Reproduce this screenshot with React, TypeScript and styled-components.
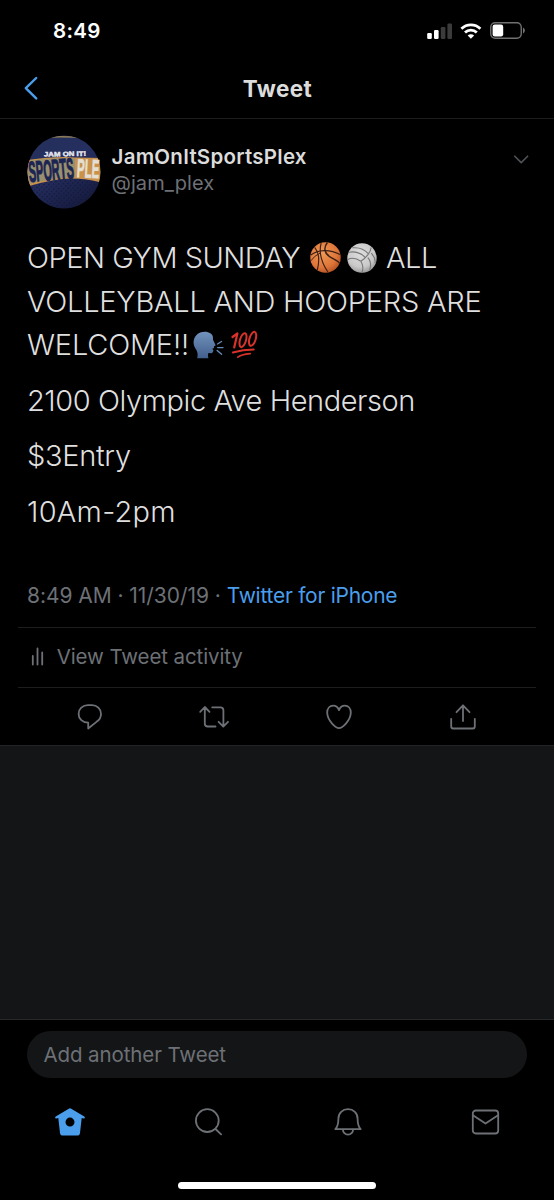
import React from "react";
import styled, { createGlobalStyle } from "styled-components";

const BLUE = "#4a9eeb";
const MUTED = "#6d7176";
const LINE = "#1c1d1f";

const GlobalStyle = createGlobalStyle`
  *, *::before, *::after { box-sizing: border-box; }
  html, body { margin: 0; background: #000; }
  body { font-family: Inter, "Liberation Sans", sans-serif; }
  p, h1 { margin: 0; }
  svg { display: block; flex: none; overflow: visible; }
`;

const Screen = styled.div`
  width: 554px;
  height: 1200px;
  display: flex;
  flex-direction: column;
  background: #000;
  overflow: hidden;
  white-space: nowrap;
`;

const StatusBar = styled.div`
  height: 60px;
  padding: 1px 29px 0 53px;
  display: flex;
  align-items: center;
  justify-content: space-between;
`;

const Clock = styled.span`
  color: #fff;
  font-size: 20.5px;
  font-weight: 600;
  letter-spacing: 0.3px;
`;

const StatusIcons = styled.div`
  display: flex;
  align-items: center;
  gap: 8px;
`;

const NavBar = styled.header`
  height: 59px;
  padding: 0 23px 2px;
  display: grid;
  grid-template-columns: 60px 1fr 60px;
  align-items: center;
  border-bottom: 1px solid ${LINE};
`;

const Title = styled.h1`
  color: #dcdcdc;
  text-align: center;
  padding-left: 1px;
  font-size: 22.5px;
  font-weight: 700;
  letter-spacing: 0.4px;
`;

const Tweet = styled.article`
  height: 627px;
  padding: 16px 18px 0;
  border-bottom: 1px solid #222426;
`;

const Author = styled.div`
  display: flex;
  height: 74px;
  padding: 0 7px 0 9px;
`;

const Names = styled.div`
  flex: 1;
  padding: 9px 0 0 10.5px;
`;

const Name = styled.p`
  color: #dcdcdc;
  font-size: 20.5px;
  line-height: 26px;
  font-weight: 600;
  letter-spacing: 0.25px;
`;

const Handle = styled.p`
  color: ${MUTED};
  font-size: 20px;
  line-height: 26px;
  letter-spacing: 0.1px;
`;

const MenuCaret = styled.div`
  padding-top: 20px;
`;

const Body = styled.div`
  display: flex;
  flex-direction: column;
  gap: 12px;
  padding: 27px 9px 0;
  color: #dfdfdf;
  font-size: 29px;
  line-height: 43.5px;
  font-weight: 300;
`;

const TextLine = styled.span<{ $tracking?: number }>`
  display: flex;
  align-items: center;
  height: 43.5px;
  letter-spacing: ${(p) => p.$tracking ?? 0}px;
`;

const Emoji = styled.span<{ $before?: number; $after?: number }>`
  display: inline-flex;
  margin-left: ${(p) => p.$before ?? 0}px;
  margin-right: ${(p) => p.$after ?? 0}px;
`;

const Meta = styled.p`
  height: 93.5px;
  padding: 46.5px 9px 0;
  color: ${MUTED};
  font-size: 21px;
  line-height: 32px;
  letter-spacing: -0.05px;
`;

const Source = styled.span`
  color: ${BLUE};
  letter-spacing: -0.26px;
`;

const Activity = styled.div`
  height: 61px;
  display: flex;
  align-items: center;
  gap: 13px;
  padding: 0 0 1px 12.7px;
  border-top: 1px solid ${LINE};
  border-bottom: 1px solid ${LINE};
  color: ${MUTED};
  font-size: 20.5px;
  letter-spacing: -0.1px;
`;

const Actions = styled.div`
  height: 58px;
  padding-right: 1px;
  display: grid;
  grid-template-columns: repeat(4, 124.5px);
  justify-content: center;
  justify-items: center;
  align-items: center;
`;

const Replies = styled.div`
  height: 274px;
  background: #141517;
  border-bottom: 1px solid #28292b;
`;

const Composer = styled.div`
  height: 69px;
  padding: 11px 27px;
`;

const Field = styled.div`
  height: 47px;
  border-radius: 24px;
  display: flex;
  align-items: center;
  padding-left: 16.5px;
  background: #141517;
  color: ${MUTED};
  font-size: 20.5px;
  letter-spacing: -0.1px;
`;

const TabBar = styled.nav`
  height: 66px;
  display: grid;
  grid-template-columns: repeat(4, 138.5px);
  justify-items: center;
  align-items: center;
  padding-left: 0.5px;
`;

const HomeIndicator = styled.div`
  width: 198px;
  height: 7px;
  margin: 27px auto 0;
  border-radius: 4px;
  background: #fff;
`;

const Stroke = styled.svg<{ $color?: string; $weight?: number }>`
  fill: none;
  stroke: ${(p) => p.$color ?? MUTED};
  stroke-width: ${(p) => p.$weight ?? 1.8};
  stroke-linecap: round;
  stroke-linejoin: round;
`;

function Signal() {
  return (
    <svg width="25" height="16" viewBox="0 0 25 16">
      <rect x="-0.8" y="10" width="4.6" height="6" rx="1.2" fill="#fff" />
      <rect x="6" y="7" width="4.6" height="9" rx="1.2" fill="#fff" />
      <rect x="12.8" y="4" width="4.6" height="12" rx="1.2" fill="#3b3b3b" />
      <rect x="19.4" y="0.5" width="4.6" height="15.5" rx="1.2" fill="#3b3b3b" />
    </svg>
  );
}

function Wifi() {
  return (
    <svg width="21" height="16" viewBox="0.6 0 21 16" fill="none" stroke="#fff" strokeWidth="2.8">
      <path d="M1 5.7a13.6 13.6 0 0 1 19 0" />
      <path d="M4.6 9.5a8.4 8.4 0 0 1 11.8 0" />
      <path d="M10.5 15.8 7.3 12.6a4.6 4.6 0 0 1 6.4 0z" fill="#fff" stroke="none" />
    </svg>
  );
}

function Battery() {
  return (
    <svg width="35" height="17" viewBox="0 0 35 17">
      <rect x="0.75" y="0.75" width="30.5" height="15.5" rx="4.4" fill="none" stroke="#717171" strokeWidth="1.4" />
      <rect x="2.6" y="2.6" width="10.6" height="11.8" rx="2.2" fill="#fff" />
      <path d="M33 5.6q1.9 1 1.9 2.9T33 11.4z" fill="#717171" />
    </svg>
  );
}

function Avatar() {
  return (
    <svg width="74" height="74" viewBox="0 0 74 74">
      <defs>
        <clipPath id="face"><circle cx="37" cy="37" r="36.5" /></clipPath>
        <linearGradient id="navy" x1="0" y1="0" x2="0.6" y2="1">
          <stop offset="0" stopColor="#263059" />
          <stop offset="0.5" stopColor="#252f60" />
          <stop offset="1" stopColor="#171c40" />
        </linearGradient>
        <pattern id="mesh" width="3.4" height="3.4" patternUnits="userSpaceOnUse" patternTransform="rotate(42)">
          <circle cx="1.7" cy="1.7" r="0.9" fill="#10153a" />
        </pattern>
      </defs>
      <g clipPath="url(#face)">
        <rect width="74" height="74" fill="url(#navy)" />
        <path d="M0 48Q36 38 74 47v27H0z" fill="url(#mesh)" opacity="0.65" />
        <path d="M16 2.4q20-1.500 42 .4" stroke="#8e7d55" strokeWidth="1.4" fill="none" />
        <path d="M0 25Q30 21 48 22.500L74 23V47.500Q60 43.500 44 43.500T0 51.500z" fill="#c9914a" />
        <path d="M0 26Q30 22 48 23.500V42Q24 43 0 49.500z" fill="#99906f" />
      </g>
      <g fontFamily="Liberation Sans, sans-serif" fontWeight="700">
        <text x="17" y="21.2" fontSize="6.500" fill="#e8e8ee" stroke="#e8e8ee" strokeWidth="0.4" textLength="42" lengthAdjust="spacingAndGlyphs" transform="rotate(-1 38 20)">JAM ON IT!</text>
        <text x="2.500" y="47" fontSize="29" fill="#1b2452" stroke="#1b2452" strokeWidth="1.1" textLength="45" lengthAdjust="spacingAndGlyphs" transform="rotate(-5 2 46)">SPORTS</text>
        <text x="49.500" y="42" fontSize="26" fill="#e4dfd2" stroke="#e4dfd2" strokeWidth="0.8" textLength="22.500" lengthAdjust="spacingAndGlyphs" transform="rotate(3 49 42)">PLE</text>
      </g>
    </svg>
  );
}

function Basketball() {
  return (
    <svg width="31" height="31" viewBox="0 0 32 32">
      <defs>
        <radialGradient id="orange" cx="0.4" cy="0.35" r="0.75">
          <stop offset="0" stopColor="#f09a55" />
          <stop offset="0.65" stopColor="#dd7438" />
          <stop offset="1" stopColor="#a9481c" />
        </radialGradient>
      </defs>
      <circle cx="16" cy="16" r="15.7" fill="url(#orange)" />
      <g fill="none" stroke="#3d2017" strokeWidth="1.2">
        <path d="M11.5 1.2C9.5 9 11 20 18.5 31" />
        <path d="M18 .5C13.5 6 15 12 21 15.5S30 20 30.5 22" strokeWidth="1.5" />
        <path d="M.8 13.5C8 8 20 7 31 13" />
        <path d="M4.8 5.5C9.500 11 9.800 20 7.500 29" />
        <path d="M.8 19.5Q4 14.5 11 11" strokeWidth="1" />
      </g>
    </svg>
  );
}

function Volleyball() {
  return (
    <svg width="30" height="30" viewBox="0 0 31 31">
      <defs>
        <radialGradient id="white" cx="0.45" cy="0.35" r="0.7">
          <stop offset="0" stopColor="#dedede" />
          <stop offset="0.65" stopColor="#c9c9c9" />
          <stop offset="1" stopColor="#929292" />
        </radialGradient>
      </defs>
      <circle cx="15.5" cy="15.5" r="15.2" fill="url(#white)" />
      <g fill="none" stroke="#777" strokeWidth="1.1">
        <path d="M14.3 18.8C9.5 15.5 4.8 15 0.8 17" />
        <path d="M14.3 18.8C19.8 15.5 24.5 9.5 25 4.5" />
        <path d="M14.3 18.8C16.5 22.5 16.8 27 15.5 30.4" />
        <path d="M2 9.5C8 8.5 14.5 10.5 18.7 14.8" />
        <path d="M5.5 5C12 4.2 18.5 7 22 11" />
        <path d="M21.5 15C24.5 18 25 23 23.5 28" />
        <path d="M25 10.5C28 13.5 29.5 17 29 21" />
      </g>
    </svg>
  );
}

function SpeakingHead() {
  return (
    <svg width="31" height="28" viewBox="0 0 31 28">
      <defs>
        <linearGradient id="head" x1="0" y1="0" x2="0" y2="1">
          <stop offset="0" stopColor="#7193bd" />
          <stop offset="1" stopColor="#435f8d" />
        </linearGradient>
      </defs>
      <path
        fill="url(#head)"
        d="M4.2 27.2C5.2 22.5 4.4 20.3 2.4 17.4-.7 12.7.3 6.5 4.6 3.1 8.7-.2 14.3.1 17.7 2.5c2.4 1.7 2.4 3.8 2.3 6.2l2.4 5c.3.8-.1 1.1-1.3 1.4l-.1 1.9-1.7.8 1.1 1.4c-.3 2.8-1.4 3.4-4.8 2.9-.8.9-.7 2.8-.2 5.1z"
      />
      <g stroke="#648ab8" strokeWidth="1.4" strokeLinecap="round">
        <path d="M24.5 13 28.5 10.5M24.7 16.6H30M24.2 19.5l4.4 3.8" />
      </g>
    </svg>
  );
}

function Hundred() {
  return (
    <svg width="28" height="28" viewBox="0 0 28 28" fill="none" stroke="#d8322b" strokeLinecap="round" strokeLinejoin="round">
      <path d="M1.5 6 6.4 2.4 3.2 16.5" strokeWidth="2.2" />
      <ellipse cx="12" cy="9.2" rx="3" ry="7.2" transform="rotate(17 12 9.2)" strokeWidth="2" />
      <ellipse cx="21.6" cy="7.8" rx="3.1" ry="7.2" transform="rotate(17 21.6 7.8)" strokeWidth="2" />
      <path d="M1.8 21.5Q12 18.6 22.8 18.5" strokeWidth="1.9" />
      <path d="M6.8 26.2q3-2.6 12.4-3.5" strokeWidth="1.7" />
    </svg>
  );
}

export default function App() {
  return (
    <Screen>
      <GlobalStyle />
      <StatusBar>
        <Clock>8:49</Clock>
        <StatusIcons>
          <Signal />
          <Wifi />
          <Battery />
        </StatusIcons>
      </StatusBar>

      <NavBar>
        <Stroke width="16" height="24" viewBox="0 0 16 24" $color={BLUE} $weight={2.4}>
          <path d="M13.2 2 2.8 12.2 13.2 22.4" />
        </Stroke>
        <Title>Tweet</Title>
      </NavBar>

      <Tweet>
        <Author>
          <Avatar />
          <Names>
            <Name>JamOnItSportsPlex</Name>
            <Handle>@jam_plex</Handle>
          </Names>
          <MenuCaret>
            <Stroke width="16" height="10" viewBox="0 0 16 10" $color="#505356" $weight={1.6}>
              <path d="M1.8 1.2 8.2 7.6 14.6 1.2" />
            </Stroke>
          </MenuCaret>
        </Author>

        <Body>
          <p>
            <TextLine $tracking={-0.5}>
              OPEN GYM SUNDAY
              <Emoji $before={10} $after={5.5}><Basketball /></Emoji>
              <Emoji $after={9.5}><Volleyball /></Emoji>
              ALL
            </TextLine>
            <TextLine $tracking={-0.24}>VOLLEYBALL AND HOOPERS ARE</TextLine>
            <TextLine $tracking={-0.2}>
              WELCOME!!
              <Emoji $before={4} $after={7}><SpeakingHead /></Emoji>
              <Emoji><Hundred /></Emoji>
            </TextLine>
          </p>
          <p><TextLine $tracking={-0.44}>2100 Olympic Ave Henderson</TextLine></p>
          <p><TextLine $tracking={-0.3}>$3Entry</TextLine></p>
          <p><TextLine $tracking={0.25}>10Am-2pm</TextLine></p>
        </Body>

        <Meta>
          8:49 AM · 11/30/19 · <Source>Twitter for iPhone</Source>
        </Meta>

        <Activity>
          <Stroke width="13" height="19" viewBox="0 0 13 19">
            <path d="M1.8 9v8.6M6.5 1.4v16.2M11.2 5.4v12.2" />
          </Stroke>
          View Tweet activity
        </Activity>

        <Actions>
          <Stroke width="26" height="26" viewBox="0 0 26 26">
            <path d="M11 1.2h4c5 0 9 3.8 9 8.7 0 3.2-1.5 5.8-4.2 7.7L11.2 24.500v-5.800C5.600 18.700 1.600 14.900 1.600 9.900c0-4.900 4-8.700 9.400-8.700z" />
          </Stroke>
          <Stroke width="30" height="24" viewBox="0 0 30 24">
            <path d="M1.2 6.8 5.8 2l4.7 4.8M5.8 2.3v16.2q0 3 3 3h7.7M13.2 2.3h8.2q3 0 3 3v16M19.6 16.8l4.7 4.8 4.7-4.8" />
          </Stroke>
          <Stroke width="26" height="26" viewBox="0 0 26 26">
            <path d="M13 24.2C9.8 24.2 1.2 16.5 1.2 8.6 1.2 4.3 3.7 1.6 7.2 1.6c2.7 0 4.7 1.5 5.8 4.5 1.1-3 3.1-4.5 5.8-4.5 3.5 0 6 2.7 6 7 0 7.9-8.6 15.6-11.8 15.6z" />
          </Stroke>
          <Stroke width="26" height="26" viewBox="0 0 26 26">
            <path d="M1.2 14.8v7.700q0 2 2 2h19.600q2 0 2-2v-7.700M13 17V1.400M6.500 8.200 13 1.400l6.500 6.800" />
          </Stroke>
        </Actions>
      </Tweet>

      <Replies />

      <Composer>
        <Field>Add another Tweet</Field>
      </Composer>

      <TabBar>
        <svg width="30" height="28" viewBox="0 0 30 28">
          <path
            fill={BLUE}
            fillRule="evenodd"
            d="M14.2.4q.8-.5 1.6 0L29.3 8.6q.7.6.5 1.4-.3.7-1.2.4L26.7 10 25 24.9q-.4 2.7-3 2.7H8q-2.6 0-3-2.7L3.3 10l-1.9.4q-.9.3-1.2-.4-.2-.8.5-1.4zM15 9.6a4.5 4.5 0 1 0 0 9 4.5 4.5 0 0 0 0-9z"
          />
        </svg>
        <Stroke width="28" height="28" viewBox="-0.5 0 28 28">
          <circle cx="12.8" cy="12.6" r="11.4" />
          <path d="m21 21 5.6 5.4" />
        </Stroke>
        <Stroke width="28" height="28" viewBox="0 0 28 28">
          <path d="M2.4 21.2C5.5 17.5 5.4 14.5 5.4 10.7 5.4 5 9.6 1.2 15 1.2s9.6 3.8 9.6 9.500c0 3.800-.1 6.800 3 10.500zM9.900 21.400a5.100 5.300 0 0 0 10.200 0" />
        </Stroke>
        <Stroke width="28" height="26" viewBox="-0.5 0 28 26">
          <rect x="1.3" y="1.500" width="25.400" height="23" rx="3" />
          <path d="m1.8 6.500 12.200 8 12.200-8" />
        </Stroke>
      </TabBar>
      <HomeIndicator />
    </Screen>
  );
}
